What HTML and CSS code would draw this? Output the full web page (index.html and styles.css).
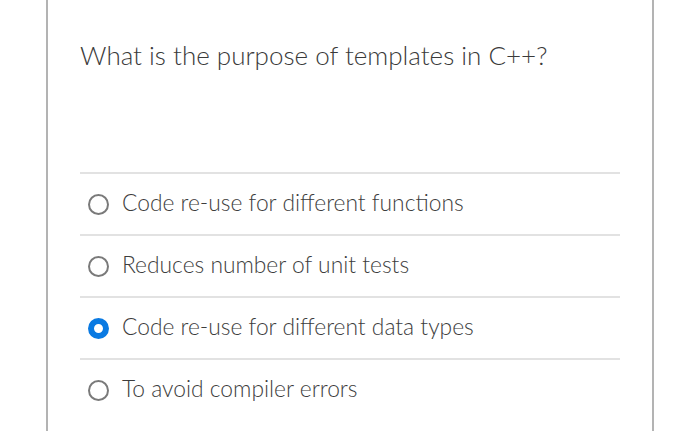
FILE: index.html
```html
<!DOCTYPE html>
<html lang="en">
<head>
<meta charset="utf-8">
<title>Quiz question</title>
<link rel="stylesheet" href="styles.css">
</head>
<body>
<div class="card">
  <h1 class="question">What is the purpose of templates in C++?</h1>
  <ul class="options">
    <li class="option"><span class="radio"></span><span class="label">Code re-use for different functions</span></li>
    <li class="option"><span class="radio"></span><span class="label">Reduces number of unit tests</span></li>
    <li class="option"><span class="radio radio-checked"></span><span class="label">Code re-use for different data types</span></li>
    <li class="option option-last"><span class="radio"></span><span class="label">To avoid compiler errors</span></li>
  </ul>
</div>
</body>
</html>
```

FILE: styles.css
```css
html, body {
  margin: 0;
  padding: 0;
  background: #ffffff;
}
body {
  font-family: Lato, "Open Sans", sans-serif;
  color: #3d3d3d;
}
.card {
  margin-left: 46px;
  width: 608px;
  height: 431px;
  box-sizing: border-box;
  border-left: 2px solid #b3b3b3;
  border-right: 2px solid #b3b3b3;
  padding: 0 32px;
  overflow: hidden;
}
.question {
  margin: 0;
  padding-top: 39px;
  height: 172px;
  box-sizing: border-box;
  font-size: 26px;
  font-weight: 300;
  line-height: 32px;
  color: #3a3a3a;
}
.options {
  list-style: none;
  margin: 0;
  padding: 0;
  border-top: 2px solid #e2e2e2;
}
.option {
  display: flex;
  align-items: center;
  height: 60px;
  border-bottom: 2px solid #e2e2e2;
}
.option-last {
  border-bottom: none;
}
.radio {
  width: 21px;
  height: 21px;
  box-sizing: border-box;
  border-radius: 50%;
  border: 2.5px solid #7a7a7a;
  margin-left: 8px;
  margin-right: 13px;
  flex: none;
}
.radio-checked {
  border: 6.5px solid #0a7ae2;
  background: #ffffff;
}
.label {
  font-size: 22.8px;
  font-weight: 300;
  color: #3d3d3d;
  padding-bottom: 4px;
}
```
